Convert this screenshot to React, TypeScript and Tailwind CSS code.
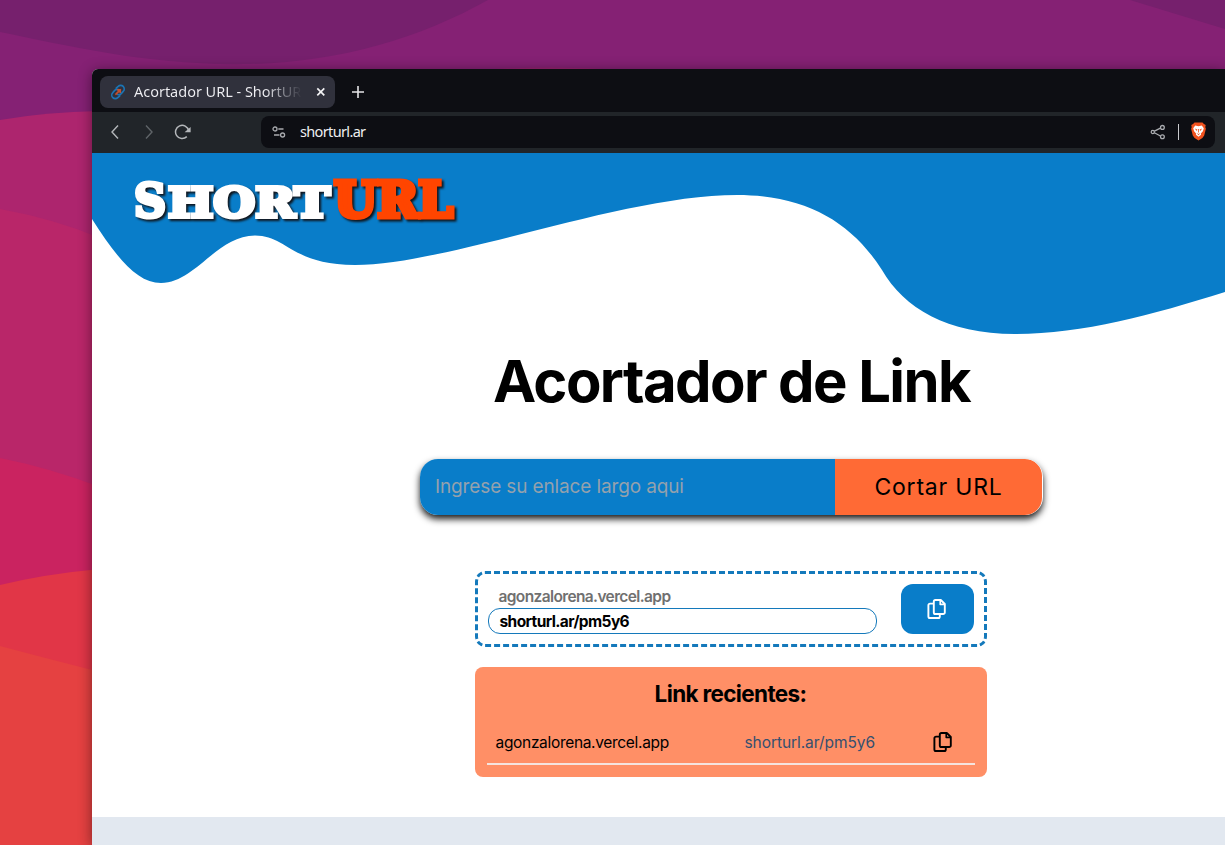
import React from "react";

function Wallpaper() {
  return (
    <svg className="absolute inset-0 h-full w-full" viewBox="0 0 1225 845" preserveAspectRatio="none">
      <rect width="1225" height="845" fill="#852174" />
      <path d="M0 0H488C420 38 340 62 250 64C150 66 70 46 0 32Z" fill="#76206d" />
      <path d="M1130 0H1225V29Z" fill="#76206d" />
      <path d="M480 70Q550 65 625 70Z" fill="#96226f" />
      <path d="M0 120Q45 112 100 111V845H0Z" fill="#ad256e" />
      <path d="M0 209Q55 219 100 238V845H0Z" fill="#b92669" />
      <path d="M0 458Q50 468 100 487V845H0Z" fill="#ca2360" />
      <path d="M0 585Q45 574 100 569V845H0Z" fill="#e13647" />
      <path d="M0 646Q45 658 100 672V845H0Z" fill="#e54141" />
    </svg>
  );
}

function Favicon() {
  return (
    <svg width="16" height="16" viewBox="0 0 16 16" fill="none" strokeLinecap="round">
      <path d="M6.2 4.2 8.2 2.4a3.5 3.5 0 0 1 5 5l-1.9 2.2a3.6 3.6 0 0 1-3.6.8" stroke="#1b74b4" strokeWidth="1.6" />
      <path d="M9.8 11.8 7.8 13.6a3.5 3.5 0 0 1-5-5l1.9-2.2a3.6 3.6 0 0 1 3.6-.8" stroke="#1b74b4" strokeWidth="1.6" />
      <path d="M6 10.2 10.2 5.8M7.8 5.8h2.4v2.4" stroke="#c2502f" strokeWidth="1.8" />
    </svg>
  );
}

function FilesIcon({ className }: { className?: string }) {
  return (
    <svg className={className} width="20" height="20" viewBox="0 0 20 20" fill="none" stroke="currentColor" strokeWidth="1.9" strokeLinejoin="round">
      <path d="M8.4 1h5.4l4 4v8.4a1.6 1.6 0 0 1-1.6 1.6H8.4a1.6 1.6 0 0 1-1.6-1.6V2.6A1.6 1.6 0 0 1 8.4 1z" />
      <path d="M13.2 1v4.4h4.4" strokeWidth="1.6" />
      <path d="M6.8 4.6H3A1.6 1.6 0 0 0 1.4 6.2v11.2A1.6 1.6 0 0 0 3 19h8.2a1.6 1.6 0 0 0 1.6-1.6V15" />
    </svg>
  );
}

function TabStrip() {
  return (
    <div className="flex h-[43px] items-center bg-[#0d0e13] pl-2 pt-[3px]">
      <div className="flex h-8 w-[235px] items-center rounded-lg bg-[#30313c] pl-2.5 pr-2">
        <Favicon />
        <div className="relative -top-px ml-2 w-[168px] whitespace-nowrap bg-linear-to-r from-[#f0f0f4] from-78% to-[#30313c] bg-clip-text text-[14.5px] leading-5 tracking-[-0.02px] text-transparent">
          Acortador URL - ShortUR
        </div>
        <svg className="ml-3.5" width="10" height="10" viewBox="0 0 10 10" stroke="#f2f2f4" strokeWidth="1.7">
          <path d="M1.3 1.3l7 7M8.3 1.3l-7 7" />
        </svg>
      </div>
      <svg className="ml-4" width="14" height="14" viewBox="0 0 14 14" stroke="#e5e5e8" strokeWidth="1.6">
        <path d="M7 1v12M1 7h12" />
      </svg>
    </div>
  );
}

function Toolbar() {
  return (
    <div className="flex h-[41px] items-center bg-[#212529] pb-0.5 pl-[17px] pr-2.5">
      <svg width="13" height="16" viewBox="0 0 13 16" fill="none" stroke="#b4b7ba" strokeWidth="1.4">
        <path d="M9 1.5 3 8l6 6.5" />
      </svg>
      <svg className="ml-[21px]" width="13" height="16" viewBox="0 0 13 16" fill="none" stroke="#5f6468" strokeWidth="1.4">
        <path d="M3 1.5 9 8l-6 6.5" />
      </svg>
      <svg className="ml-[18px]" width="18" height="16" viewBox="0 0 18 16" fill="none" stroke="#b4b7ba" strokeWidth="1.5">
        <path d="M12.8 12.6A6.6 6.6 0 1 1 14.6 6.6" />
        <path d="M10.6 8.2h6V3z" fill="#b4b7ba" stroke="none" />
      </svg>
      <div className="ml-[69px] flex h-8 flex-1 items-center rounded-lg bg-[#0d0e13] pl-[11px] pr-2">
        <svg width="14" height="14" viewBox="0 0 14 14" fill="none" stroke="#a9abaf" strokeWidth="1.3">
          <circle cx="3" cy="4" r="2" />
          <path d="M6.3 4H11.5M2 10H7.5" />
          <circle cx="10.6" cy="10" r="2" />
        </svg>
        <span className="relative -top-px ml-3.5 text-[14.5px] leading-5 tracking-[-0.65px] text-[#eeeef0]">shorturl.ar</span>
        <svg className="ml-auto" width="16" height="16" viewBox="0 0 16 16" fill="none" stroke="#a9abaf" strokeWidth="1.3">
          <path d="M4.4 7.2 10.4 4.2M4.4 8.8 10.4 12" />
          <circle cx="2.8" cy="8" r="1.6" />
          <circle cx="12.4" cy="3.4" r="1.9" />
          <circle cx="12.4" cy="12.8" r="1.9" />
        </svg>
        <div className="ml-3 mr-[11px] h-4 w-px bg-[#c9cacd]" />
        <svg width="17" height="19" viewBox="0 0 17 19">
          <path d="M4.5.6h8l1.4 1.5 1.8.8-.4 2.3.6 1.6-1.7 6.8-1.8 2.4-3.9 2.6-3.9-2.6-1.8-2.4L1.1 6.8l.6-1.6-.4-2.3 1.8-.8z" fill="#f0521f" />
          <path d="M5.2 3.6 8.5 4.2l3.3-.6 2 2.7-.9 3-2 2.2.2 1.3-2.6 1.9-2.6-1.9.2-1.3-2-2.2-.9-3z" fill="#fff" />
          <path d="M4.7 6.6 7.4 7.4 6.8 9zM12.3 6.6 9.6 7.4l.6 1.6zM6.6 11l1.9.9 1.9-.9-1.9 2.2zM8.1 7h.8v3.6h-.8z" fill="#f0521f" />
        </svg>
      </div>
    </div>
  );
}

function Logo() {
  return (
    <svg
      className="absolute left-[37px] top-[18px] overflow-visible"
      width="330"
      height="54"
      fontFamily="'DejaVu Serif', serif"
      fontWeight="700"
      strokeLinejoin="miter"
      style={{ filter: "drop-shadow(2px 2px 1px #10151c)" }}
    >
      <g fill="#fff" stroke="#fff" strokeWidth="4">
        <text x="5" y="45.5" fontSize="46" textLength="32" lengthAdjust="spacingAndGlyphs">S</text>
        <text x="39" y="45.5" fontSize="41" textLength="162" lengthAdjust="spacingAndGlyphs">HORT</text>
      </g>
      <text x="205" y="45.5" fontSize="48" fill="#ff4500" stroke="#ff4500" strokeWidth="5" textLength="119" lengthAdjust="spacingAndGlyphs">URL</text>
    </svg>
  );
}

function Header() {
  return (
    <header className="relative h-[182px]">
      <svg className="block" width="1133" height="182" viewBox="0 0 1133 182">
        <path
          d="M0 0V66C25 105 45 130 69 130C103 130 125 82.5 163 82.5C195 82.5 200 112 263 112C355 112 530 42 645 42C715 42 760 70 790 117C812 155 855 181 923 181C990 181 1060 162 1133 139V0Z"
          fill="#097dc9"
        />
      </svg>
      <Logo />
    </header>
  );
}

function LinkForm() {
  return (
    <form className="mt-[42px] flex h-14 w-[623px] overflow-hidden rounded-[18px] bg-white pr-px shadow-[0_4px_7px_0_rgba(0,0,0,0.9)]">
      <div className="flex w-[415px] items-center bg-[#097dc9] pl-[15px] text-[19px] tracking-[-0.13px] text-[#94a1ad]">Ingrese su enlace largo aqui</div>
      <button type="button" className="flex-1 rounded-r-[17px] bg-[#ff6a35] text-[23px] tracking-[0.8px] text-black">Cortar URL</button>
    </form>
  );
}

function ShortResult() {
  return (
    <div className="mr-0.5 mt-14 flex h-[76px] w-[512px] items-center justify-between rounded-[10px] border-[3px] border-dashed border-[#1479bb] px-2.5">
      <div className="w-[389px]">
        <p className="pl-[11px] pt-px text-[15.5px] font-semibold leading-[23px] tracking-[-0.62px] text-[#707070]">agonzalorena.vercel.app</p>
        <div className="h-[26px] rounded-xl border border-[#1479bb] pl-[11px] text-[15.5px] font-bold leading-[25px] tracking-[-0.6px] text-black">shorturl.ar/pm5y6</div>
      </div>
      <button type="button" className="flex h-[50px] w-[73px] items-center justify-center rounded-xl bg-[#097dc9] text-white">
        <FilesIcon />
      </button>
    </div>
  );
}

function RecentLinks() {
  return (
    <section className="mr-0.5 mt-5 h-[110px] w-[512px] rounded-lg bg-[#ff8f66] px-3 pt-[11px]">
      <h2 className="text-center text-[22.5px] font-bold leading-8 tracking-[-0.65px] text-black">Link recientes:</h2>
      <div className="mt-[11px] flex h-11 items-center border-b-2 border-[#f5e4de] pl-[9px] text-[15.5px] leading-6">
        <span className="w-[249px] pt-0.5 tracking-[-0.32px] text-black">agonzalorena.vercel.app</span>
        <span className="pt-0.5 tracking-[-0.07px] text-[#36506f]">shorturl.ar/pm5y6</span>
        <FilesIcon className="ml-auto mr-[22px] text-black" />
      </div>
    </section>
  );
}

export default function App() {
  return (
    <div className="relative h-[845px] w-[1225px] overflow-hidden font-['Noto_Sans',sans-serif]">
      <Wallpaper />
      <div className="relative ml-[92px] mt-[69px] flex h-[776px] flex-col rounded-tl-md bg-white shadow-[0_2px_14px_rgba(0,0,0,0.45)]">
        <div className="overflow-hidden rounded-tl-md">
          <TabStrip />
          <Toolbar />
        </div>
        <Header />
        <main className="ml-[327px] flex w-[625px] flex-col items-center font-['Inter',sans-serif]">
          <h1 className="mt-2.5 whitespace-nowrap text-[58px] font-bold leading-[72px] tracking-[-1.6px] text-black">Acortador de Link</h1>
          <LinkForm />
          <ShortResult />
          <RecentLinks />
        </main>
        <footer className="mt-10 flex-1 bg-[#e2e8f0]" />
      </div>
    </div>
  );
}
